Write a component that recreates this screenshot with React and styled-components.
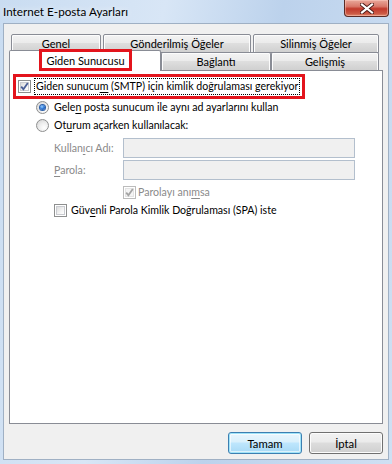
import React from "react";
import styled, { createGlobalStyle } from "styled-components";

const Global = createGlobalStyle`
  html, body {
    margin: 0;
    padding: 0;
    overflow: hidden;
    background: #ffffff;
  }
  body {
    font-family: Lato, "Noto Sans", sans-serif;
    font-size: 10.6px;
    color: #000;
  }
`;

const Window = styled.div`
  width: 392px;
  height: 464px;
  display: flex;
  flex-direction: column;
  background: linear-gradient(100deg, #c9dcf1 0%, #d8e6f6 35%, #bcd2ec 60%, #cfe0f3 100%);
  box-sizing: border-box;
`;

const TitleBar = styled.div`
  height: 23px;
  display: flex;
  align-items: flex-start;
  justify-content: space-between;
  padding-left: 3px;
  padding-right: 3px;
`;

const Title = styled.div`
  font-size: 11.7px;
  line-height: 23px;
  color: #000;
  text-shadow: 0 0 6px rgba(255, 255, 255, 0.9);
`;

const CloseButton = styled.div`
  width: 45px;
  height: 17px;
  box-sizing: border-box;
  border: 1px solid #5a2a25;
  border-top: none;
  border-radius: 0 0 4px 4px;
  background: linear-gradient(#e9a89b 0%, #d9786a 40%, #c1392b 55%, #cc5a45 85%, #e08a6e 100%);
  box-shadow: inset 0 0 0 1px rgba(255, 210, 200, 0.45);
  display: flex;
  align-items: center;
  justify-content: center;
`;

const Client = styled.div`
  flex: 1;
  margin: 0 3px 4px 3px;
  border: 1px solid #9fb0c4;
  background: #f0f0f0;
  padding: 10px 5px 0 5px;
  display: flex;
  flex-direction: column;
`;

const TabRow = styled.div`
  display: flex;
  align-items: flex-start;
  height: ${(p) => p.$height}px;
  margin-top: ${(p) => p.$offset}px;
  padding-left: ${(p) => p.$indent}px;
  gap: ${(p) => p.$gap}px;
`;

const Tab = styled.div`
  width: ${(p) => p.$width}px;
  height: ${(p) => p.$height}px;
  box-sizing: border-box;
  border: 1px solid #898c95;
  border-bottom: ${(p) => (p.$back ? "1px solid #898c95" : "none")};
  border-radius: 2px 2px 0 0;
  background: linear-gradient(#f3f3f3 0%, #ebebeb 45%, #dedede 50%, #d0d0d0 100%);
  box-shadow: inset 1px 1px 0 #fcfcfc, inset -1px 0 0 #fcfcfc;
  display: flex;
  align-items: center;
  justify-content: center;
  font-size: 11px;
  line-height: 16px;
  padding-top: 1px;
  white-space: nowrap;
`;

const ActiveTab = styled.div`
  width: ${(p) => p.$width}px;
  height: 21px;
  margin-top: -2px;
  box-sizing: border-box;
  border: 1px solid #898c95;
  border-bottom: none;
  border-radius: 2px 2px 0 0;
  background: #ffffff;
  position: relative;
  z-index: 1;
  display: flex;
  align-items: flex-start;
  justify-content: center;
  padding-left: 1px;
`;

const RedMark = styled.span`
  display: inline-flex;
  align-items: center;
  justify-content: center;
  border: 3px solid #e3141c;
  box-sizing: border-box;
  width: 93px;
  height: 22px;
  margin-top: -2px;
  font-size: 11px;
  white-space: nowrap;
`;

const Panel = styled.div`
  height: 354px;
  box-sizing: border-box;
  border: 1px solid #898c95;
  background: #ffffff;
  padding: 3px 0 0 3px;
  display: flex;
  flex-direction: column;
`;

const AuthRow = styled.div`
  width: 292px;
  height: 25px;
  box-sizing: border-box;
  border: 3px solid #e3141c;
  display: flex;
  align-items: center;
  padding-left: 2px;
`;

const FocusText = styled.span`
  margin-left: 3px;
  border: 1px dotted #000;
  padding: 0 1px 0 1px;
  line-height: 15px;
  white-space: nowrap;
`;

const Option = styled.div`
  display: flex;
  align-items: center;
  height: 18px;
  margin-left: ${(p) => p.$indent}px;
  margin-top: ${(p) => p.$top || 0}px;
  color: ${(p) => (p.$disabled ? "#8a8a8a" : "#000")};
  white-space: nowrap;
`;

const OptionText = styled.span`
  margin-left: ${(p) => p.$gap || 5}px;
  line-height: 16px;
`;

const Key = styled.u`
  text-decoration-thickness: 1px;
  text-underline-offset: 2px;
`;

const Box = styled.span`
  width: 13px;
  height: 13px;
  box-sizing: border-box;
  flex: none;
  border: 1px solid ${(p) => (p.$disabled ? "#bcbcbc" : "#8e8f8f")};
  background: #fff;
  display: flex;
  align-items: center;
  justify-content: center;
  position: relative;
  &::before {
    content: "";
    position: absolute;
    inset: 1px;
    border: 1px solid ${(p) => (p.$disabled ? "#e3e3e3" : "#c9cbd0")};
    background: ${(p) =>
      p.$disabled
        ? "#f4f4f4"
        : "linear-gradient(135deg, #dcdcdc 0%, #f4f4f4 60%, #ffffff 100%)"};
  }
  svg {
    position: relative;
  }
`;

const Radio = styled.span`
  width: 13px;
  height: 13px;
  box-sizing: border-box;
  flex: none;
  border-radius: 50%;
  border: 1px solid #8e8f8f;
  background: radial-gradient(circle at 65% 70%, #ffffff 0%, #eeeeee 45%, #cfcfcf 100%);
  display: flex;
  align-items: center;
  justify-content: center;
  &::after {
    content: "";
    width: 5px;
    height: 5px;
    border-radius: 50%;
    display: ${(p) => (p.$on ? "block" : "none")};
    background: radial-gradient(circle at 40% 35%, #9ed3ff 0%, #2f7ad8 45%, #143f8a 100%);
    box-shadow: 0 0 0 1px #2a5ea8;
  }
`;

const FieldRow = styled.div`
  display: flex;
  align-items: center;
  height: 20px;
  margin-left: 41px;
  margin-top: ${(p) => p.$top}px;
`;

const FieldLabel = styled.span`
  width: 69px;
  flex: none;
  color: #8a8a8a;
  line-height: 16px;
  white-space: nowrap;
`;

const Field = styled.div`
  width: 232px;
  height: 20px;
  box-sizing: border-box;
  border: 1px solid #b3bfcd;
  background: #f0f0f0;
`;

const ButtonRow = styled.div`
  display: flex;
  justify-content: flex-end;
  gap: 7px;
  margin-top: 8px;
`;

const Button = styled.button`
  width: 74px;
  height: 22px;
  box-sizing: border-box;
  border-radius: 3px;
  font-family: Lato, "Noto Sans", sans-serif;
  font-size: 11.3px;
  color: #000;
  padding: 0;
  border: 1px solid ${(p) => (p.$default ? "#3c7fb1" : "#707070")};
  background: ${(p) =>
    p.$default
      ? "linear-gradient(#eaf6fd 0%, #d9f0fc 45%, #bee6fd 50%, #a7d9f5 100%)"
      : "linear-gradient(#f2f2f2 0%, #ebebeb 45%, #dddddd 50%, #cfcfcf 100%)"};
  box-shadow: ${(p) =>
    p.$default
      ? "inset 0 0 0 1px #9fe3f9, inset 0 0 0 2px rgba(255,255,255,0.6)"
      : "inset 0 0 0 1px #fcfcfc"};
`;

function Check({ disabled }) {
  const c = disabled ? "#a4a4a4" : "#4a5f97";
  return (
    <svg width="9" height="9" viewBox="0 0 9 9">
      <path d="M1.2 4.6 L3.4 7.2 L7.8 1" fill="none" stroke={c} strokeWidth="1.8" />
    </svg>
  );
}

function CheckBox({ checked, disabled }) {
  return <Box $disabled={disabled}>{checked && <Check disabled={disabled} />}</Box>;
}

function CloseGlyph() {
  return (
    <svg width="14" height="11" viewBox="0 0 14 11">
      <path d="M2 1.5 L12 9.5 M12 1.5 L2 9.5" stroke="#4a1a16" strokeWidth="4" strokeLinecap="square" />
      <path d="M2 1.5 L12 9.5 M12 1.5 L2 9.5" stroke="#ffffff" strokeWidth="2.2" strokeLinecap="square" />
    </svg>
  );
}

export default function App() {
  return (
    <>
      <Global />
      <Window>
        <TitleBar>
          <Title>Internet E-posta Ayarları</Title>
          <CloseButton>
            <CloseGlyph />
          </CloseButton>
        </TitleBar>
        <Client>
          <TabRow $height={19} $offset={0} $indent={2} $gap={2}>
            <Tab $back $width={90} $height={19}>Genel</Tab>
            <Tab $back $width={148} $height={19}>Gönderilmiş Öğeler</Tab>
            <Tab $back $width={126} $height={19}>Silinmiş Öğeler</Tab>
          </TabRow>
          <TabRow $height={18} $offset={-1} $indent={0} $gap={0}>
            <ActiveTab $width={152}>
              <RedMark>Giden Sunucusu</RedMark>
            </ActiveTab>
            <Tab $width={110} $height={18}>Bağlantı</Tab>
            <Tab $width={108} $height={18}>Gelişmiş</Tab>
          </TabRow>
          <Panel>
            <AuthRow>
              <CheckBox checked />
              <FocusText>
                Giden sunucu<Key>m</Key> (SMTP) için kimlik doğrulaması gerekiyor
              </FocusText>
            </AuthRow>
            <Option $indent={23} $top={-1}>
              <Radio $on />
              <OptionText>
                Gele<Key>n</Key> posta sunucum ile aynı ad ayarlarını kullan
              </OptionText>
            </Option>
            <Option $indent={23}>
              <Radio />
              <OptionText>
                Ot<Key>u</Key>rum açarken kullanılacak:
              </OptionText>
            </Option>
            <FieldRow $top={4}>
              <FieldLabel>
                Kullan<Key>ı</Key>cı Adı:
              </FieldLabel>
              <Field />
            </FieldRow>
            <FieldRow $top={2}>
              <FieldLabel>
                <Key>P</Key>arola:
              </FieldLabel>
              <Field />
            </FieldRow>
            <Option $indent={110} $top={3} $disabled>
              <CheckBox checked disabled />
              <OptionText $gap={2}>
                Parolayı anı<Key>m</Key>sa
              </OptionText>
            </Option>
            <Option $indent={41}>
              <CheckBox />
              <OptionText $gap={4}>
                Güv<Key>e</Key>nli Parola Kimlik Doğrulaması (SPA) iste
              </OptionText>
            </Option>
          </Panel>
          <ButtonRow>
            <Button $default>Tamam</Button>
            <Button>İptal</Button>
          </ButtonRow>
        </Client>
      </Window>
    </>
  );
}
